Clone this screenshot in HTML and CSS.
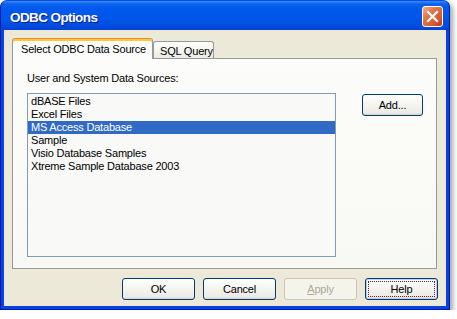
FILE: index.html
```html
<!DOCTYPE html>
<html lang="en">
<head>
    <meta charset="UTF-8">
    <title>ODBC Options</title>
    <link rel="stylesheet" href="styles.css">
</head>
<body>
    <div class="window">
        <div class="titlebar">
            <span class="title">ODBC Options</span>
            <div class="close">
                <svg width="13" height="13" viewBox="0 0 13 13">
                    <path d="M2 2 L11 11 M11 2 L2 11" stroke="#fff" stroke-width="2.2" stroke-linecap="square"/>
                </svg>
            </div>
        </div>
        <div class="client">
            <div class="tabs">
                <div class="tab active">Select ODBC Data Source</div>
                <div class="tab">SQL Query</div>
            </div>
            <div class="panel">
                <div class="panel-main">
                    <div class="label">User and System Data Sources:</div>
                    <ul class="list">
                        <li>dBASE Files</li>
                        <li>Excel Files</li>
                        <li class="selected">MS Access Database</li>
                        <li>Sample</li>
                        <li>Visio Database Samples</li>
                        <li>Xtreme Sample Database 2003</li>
                    </ul>
                </div>
                <div class="panel-side">
                    <button class="btn add-btn">Add...</button>
                </div>
            </div>
            <div class="actions">
                <button class="btn">OK</button>
                <button class="btn">Cancel</button>
                <button class="btn disabled"><u>A</u>pply</button>
                <button class="btn focused"><span>Help</span></button>
            </div>
        </div>
    </div>
</body>
</html>
```

FILE: styles.css
```css
* {
    margin: 0;
    padding: 0;
    box-sizing: border-box;
}

body {
    background: #fff;
    font-family: "Liberation Sans", Arial, sans-serif;
    font-size: 11px;
    letter-spacing: -0.2px;
    color: #000;
}

.window {
    width: 450px;
    height: 310px;
    background: #0842e0;
    border: 1px solid #0019a8;
    border-top-color: #0a4be6;
    border-radius: 7px 7px 0 0;
    box-shadow: 3px 3px 5px rgba(0, 0, 0, 0.35);
    display: flex;
    flex-direction: column;
}

.titlebar {
    height: 29px;
    border-radius: 6px 6px 0 0;
    background: linear-gradient(180deg, #3d8ff5 0%, #0a62ec 3px, #0058ee 8px, #0056ea 60%, #004ae0 88%, #0040d0 100%);
    display: flex;
    align-items: center;
    justify-content: space-between;
    padding: 0 6px 0 9px;
}

.title {
    color: #fff;
    font-weight: bold;
    font-size: 13.5px;
    letter-spacing: -0.6px;
    text-shadow: 1px 1px 0 #0a1e8a;
    margin-top: 3px;
}

.close {
    width: 21px;
    height: 21px;
    border: 1px solid #fff;
    border-radius: 3px;
    background: linear-gradient(135deg, #f2ae86 0%, #e3754a 35%, #d9572c 75%, #b8381a 100%);
    display: flex;
    align-items: center;
    justify-content: center;
    margin-top: 2px;
}

.client {
    flex: 1;
    background: #ece9d8;
    margin: 0 3px 3px 3px;
    padding: 8px 8px 6px 8px;
    display: flex;
    flex-direction: column;
}

.tabs {
    height: 20px;
    display: flex;
    align-items: flex-end;
}

.tab {
    width: 61px;
    height: 17px;
    padding: 3px 0 0 6px;
    border: 1px solid #919b9c;
    border-bottom: none;
    border-radius: 3px 3px 0 0;
    background: linear-gradient(180deg, #fefefe 0%, #f4f3ee 60%, #ebeae4 100%);
    white-space: nowrap;
}

.tab.active {
    width: 141px;
    height: 21px;
    margin-bottom: -1px;
    padding: 4px 0 0 8px;
    position: relative;
    z-index: 1;
    background: #fcfcfa;
    border-top: 1px solid #e68b2c;
    box-shadow: inset 0 2px 0 #ffc83c;
}

.panel {
    width: 425px;
    height: 211px;
    border: 1px solid #919b9c;
    background: linear-gradient(180deg, #fcfcfa 0%, #f8f8f5 100%);
    display: flex;
    padding: 13px 0 0 14px;
}

.label {
    height: 13px;
    line-height: 13px;
    margin-bottom: 8px;
}

.list {
    list-style: none;
    width: 309px;
    height: 164px;
    border: 1px solid #7f9db9;
    padding: 1px 0 0 0;
    background: #f9f9f7;
}

.list li {
    height: 13px;
    line-height: 13px;
    padding-left: 3px;
}

.list li.selected {
    background: #316ac5;
    color: #fff;
}

.panel-side {
    padding: 22px 0 0 26px;
}

.btn {
    width: 73px;
    height: 22px;
    border: 1px solid #003c74;
    border-radius: 3px;
    background: linear-gradient(180deg, #ffffff 0%, #f6f6f2 40%, #ecebe5 90%, #d6d0c5 100%);
    font-family: "Liberation Sans", Arial, sans-serif;
    font-size: 11px;
    letter-spacing: -0.2px;
    color: #000;
}

.add-btn {
    width: 61px;
}

.actions {
    margin-top: 9px;
    display: flex;
    justify-content: flex-end;
    gap: 8px;
}

.btn.disabled {
    border-color: #c9c7ba;
    background: #f5f4ea;
    color: #aca899;
}

.btn.focused {
    padding: 2px;
    box-shadow: inset 0 0 0 1px #b8d0f5;
}

.btn.focused span {
    display: flex;
    align-items: center;
    justify-content: center;
    width: 100%;
    height: 100%;
    border: 1px dotted #7a1a2a;
}
```
